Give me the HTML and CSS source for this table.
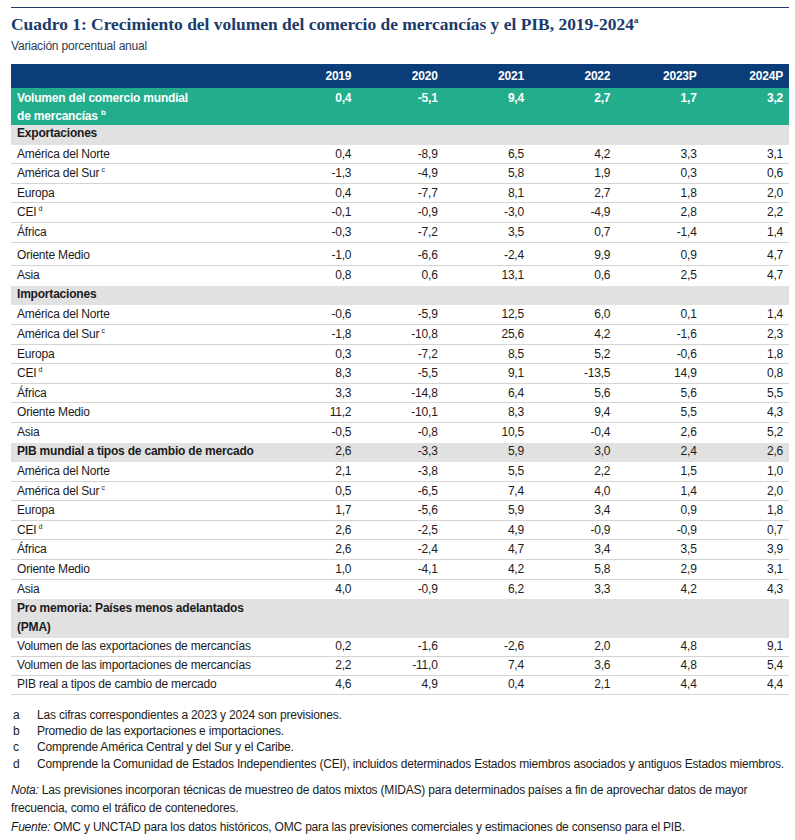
FILE: index.html
```html
<!DOCTYPE html>
<html lang="es">
<head>
<meta charset="utf-8">
<title>Cuadro 1</title>
<link rel="stylesheet" href="styles.css">
</head>
<body>
<div class="page">
  <div class="rule"></div>
  <h1 class="title">Cuadro 1: Crecimiento del volumen del comercio de mercancías y el PIB, 2019-2024<sup>a</sup></h1>
  <p class="subtitle">Variación porcentual anual</p>
  <table class="data">
    <colgroup>
      <col class="c-label"><col class="c-num"><col class="c-num"><col class="c-num"><col class="c-num"><col class="c-num"><col class="c-num">
    </colgroup>
    <thead>
      <tr class="head"><th></th><th>2019</th><th>2020</th><th>2021</th><th>2022</th><th>2023P</th><th>2024P</th></tr>
    </thead>
    <tbody>
      <tr class="total"><td>Volumen del comercio mundial<br>de mercancías <sup>b</sup></td><td>0,4</td><td>-5,1</td><td>9,4</td><td>2,7</td><td>1,7</td><td>3,2</td></tr>
      <tr class="sec"><td>Exportaciones</td><td></td><td></td><td></td><td></td><td></td><td></td></tr>
      <tr><td>América del Norte</td><td>0,4</td><td>-8,9</td><td>6,5</td><td>4,2</td><td>3,3</td><td>3,1</td></tr>
      <tr><td>América del Sur<sup>c</sup></td><td>-1,3</td><td>-4,9</td><td>5,8</td><td>1,9</td><td>0,3</td><td>0,6</td></tr>
      <tr><td>Europa</td><td>0,4</td><td>-7,7</td><td>8,1</td><td>2,7</td><td>1,8</td><td>2,0</td></tr>
      <tr><td>CEI<sup>d</sup></td><td>-0,1</td><td>-0,9</td><td>-3,0</td><td>-4,9</td><td>2,8</td><td>2,2</td></tr>
      <tr><td>África</td><td>-0,3</td><td>-7,2</td><td>3,5</td><td>0,7</td><td>-1,4</td><td>1,4</td></tr>
      <tr class="tall"><td>Oriente Medio</td><td>-1,0</td><td>-6,6</td><td>-2,4</td><td>9,9</td><td>0,9</td><td>4,7</td></tr>
      <tr class="last"><td>Asia</td><td>0,8</td><td>0,6</td><td>13,1</td><td>0,6</td><td>2,5</td><td>4,7</td></tr>
      <tr class="sec"><td>Importaciones</td><td></td><td></td><td></td><td></td><td></td><td></td></tr>
      <tr><td>América del Norte</td><td>-0,6</td><td>-5,9</td><td>12,5</td><td>6,0</td><td>0,1</td><td>1,4</td></tr>
      <tr><td>América del Sur<sup>c</sup></td><td>-1,8</td><td>-10,8</td><td>25,6</td><td>4,2</td><td>-1,6</td><td>2,3</td></tr>
      <tr><td>Europa</td><td>0,3</td><td>-7,2</td><td>8,5</td><td>5,2</td><td>-0,6</td><td>1,8</td></tr>
      <tr><td>CEI<sup>d</sup></td><td>8,3</td><td>-5,5</td><td>9,1</td><td>-13,5</td><td>14,9</td><td>0,8</td></tr>
      <tr><td>África</td><td>3,3</td><td>-14,8</td><td>6,4</td><td>5,6</td><td>5,6</td><td>5,5</td></tr>
      <tr><td>Oriente Medio</td><td>11,2</td><td>-10,1</td><td>8,3</td><td>9,4</td><td>5,5</td><td>4,3</td></tr>
      <tr class="last"><td>Asia</td><td>-0,5</td><td>-0,8</td><td>10,5</td><td>-0,4</td><td>2,6</td><td>5,2</td></tr>
      <tr class="sec"><td>PIB mundial a tipos de cambio de mercado</td><td>2,6</td><td>-3,3</td><td>5,9</td><td>3,0</td><td>2,4</td><td>2,6</td></tr>
      <tr><td>América del Norte</td><td>2,1</td><td>-3,8</td><td>5,5</td><td>2,2</td><td>1,5</td><td>1,0</td></tr>
      <tr><td>América del Sur<sup>c</sup></td><td>0,5</td><td>-6,5</td><td>7,4</td><td>4,0</td><td>1,4</td><td>2,0</td></tr>
      <tr><td>Europa</td><td>1,7</td><td>-5,6</td><td>5,9</td><td>3,4</td><td>0,9</td><td>1,8</td></tr>
      <tr><td>CEI<sup>d</sup></td><td>2,6</td><td>-2,5</td><td>4,9</td><td>-0,9</td><td>-0,9</td><td>0,7</td></tr>
      <tr><td>África</td><td>2,6</td><td>-2,4</td><td>4,7</td><td>3,4</td><td>3,5</td><td>3,9</td></tr>
      <tr><td>Oriente Medio</td><td>1,0</td><td>-4,1</td><td>4,2</td><td>5,8</td><td>2,9</td><td>3,1</td></tr>
      <tr class="last"><td>Asia</td><td>4,0</td><td>-0,9</td><td>6,2</td><td>3,3</td><td>4,2</td><td>4,3</td></tr>
      <tr class="sec two"><td>Pro memoria: Países menos adelantados (PMA)</td><td></td><td></td><td></td><td></td><td></td><td></td></tr>
      <tr class="pma"><td>Volumen de las exportaciones de mercancías</td><td>0,2</td><td>-1,6</td><td>-2,6</td><td>2,0</td><td>4,8</td><td>9,1</td></tr>
      <tr class="pma"><td>Volumen de las importaciones de mercancías</td><td>2,2</td><td>-11,0</td><td>7,4</td><td>3,6</td><td>4,8</td><td>5,4</td></tr>
      <tr class="pma"><td>PIB real a tipos de cambio de mercado</td><td>4,6</td><td>4,9</td><td>0,4</td><td>2,1</td><td>4,4</td><td>4,4</td></tr>
    </tbody>
  </table>
  <ol class="notes">
    <li><span class="key">a</span><span>Las cifras correspondientes a 2023 y 2024 son previsiones.</span></li>
    <li><span class="key">b</span><span>Promedio de las exportaciones e importaciones.</span></li>
    <li><span class="key">c</span><span>Comprende América Central y del Sur y el Caribe.</span></li>
    <li><span class="key">d</span><span>Comprende la Comunidad de Estados Independientes (CEI), incluidos determinados Estados miembros asociados y antiguos Estados miembros.</span></li>
  </ol>
  <p class="nota"><em>Nota:</em> Las previsiones incorporan técnicas de muestreo de datos mixtos (MIDAS) para determinados países a fin de aprovechar datos de mayor frecuencia, como el tráfico de contenedores.</p>
  <p class="fuente"><em>Fuente:</em> OMC y UNCTAD para los datos históricos, OMC para las previsiones comerciales y estimaciones de consenso para el PIB.</p>
</div>
</body>
</html>
```
FILE: styles.css
```css
html, body {
  margin: 0;
  padding: 0;
  background: #ffffff;
}
.page {
  width: 778px;
  margin-left: 11px;
  padding-top: 7px;
  font-family: "Liberation Sans", Arial, sans-serif;
  font-size: 12px;
  letter-spacing: -0.2px;
  color: #1b1b1b;
}
.rule {
  height: 1px;
  background: #1d3c6a;
}
.title {
  margin: 6px 0 0 0;
  font-family: "Liberation Serif", "Times New Roman", serif;
  font-weight: bold;
  font-size: 17.45px;
  letter-spacing: 0;
  line-height: 20px;
  color: #1a3b6b;
}
.title sup {
  font-size: 9px;
  vertical-align: 7px;
  line-height: 0;
}
.subtitle {
  margin: 4px 0 0 0;
  line-height: 16px;
  color: #2f3b55;
}
.data {
  margin-top: 10px;
  width: 778px;
  border-collapse: collapse;
  table-layout: fixed;
}
.c-label { width: 260px; }
.c-num { width: 86.33px; }
.data th, .data td {
  padding: 2px 6px;
  line-height: 14.6px;
  text-align: right;
  white-space: nowrap;
}
.data td:first-child, .data th:first-child {
  text-align: left;
}
.data tbody td {
  border-bottom: 1px solid #d4d4d4;
}
.data sup {
  font-size: 7px;
  line-height: 0;
  vertical-align: 5px;
  margin-left: 2px;
}
.head th {
  background: #0b3d78;
  color: #ffffff;
  font-weight: bold;
  height: 24px;
  padding-top: 0;
  padding-bottom: 0;
}
.data tr.total td {
  background: #22ae8c;
  color: #ffffff;
  font-weight: bold;
  vertical-align: top;
  line-height: 18px;
  padding-top: 1px;
  padding-bottom: 0;
  border-bottom: none;
}
.data tr.total sup {
  margin-left: 0;
  font-size: 8px;
}
.data tr.sec td {
  background: #e1e1e1;
  border-bottom: 1px solid #e1e1e1;
  padding-top: 1px;
  padding-bottom: 3px;
}
.data tr.sec td:first-child {
  font-weight: bold;
}
.data tr.sec.two td {
  padding-top: 0;
  padding-bottom: 0;
  line-height: 19px;
  height: 38px;
}
.data tr.sec.two td:first-child {
  white-space: normal;
}
.data tr.last td {
  border-bottom-color: #ffffff;
}
.data tr.tall td {
  padding-top: 5px;
  padding-bottom: 3px;
}
.data tr.pma td {
  line-height: 13.8px;
}
.notes {
  list-style: none;
  margin: 12px 0 0 0;
  padding: 0;
  color: #1b1b1b;
}
.notes li {
  display: flex;
  line-height: 16.4px;
}
.notes .key {
  width: 24px;
  flex: none;
  padding-left: 2px;
}
.nota {
  margin: 9px 0 0 0;
  line-height: 18px;
}
.fuente {
  margin: 1px 0 0 0;
  line-height: 18px;
}
```
